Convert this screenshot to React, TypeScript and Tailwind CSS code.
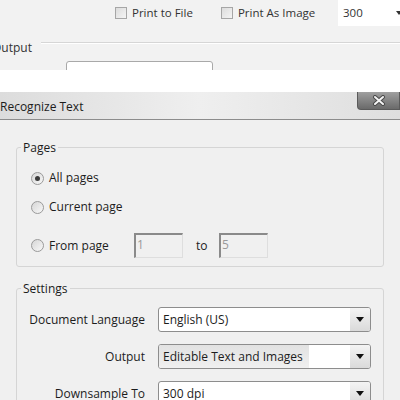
import React from 'react'

const font = "font-['Segoe_UI','Open_Sans',sans-serif]"

function Checkbox() {
  return <span className="inline-block w-[12px] h-[12px] border border-[#a6a6a6] bg-gradient-to-br from-[#dcdcdc] to-[#f4f4f4]" />
}

function Radio({ checked }: { checked?: boolean }) {
  return (
    <span className="flex items-center justify-center w-[13px] h-[13px] rounded-full border border-[#9a9a9a] bg-gradient-to-br from-[#d6d6d6] to-[#f8f8f8]">
      {checked && <span className="w-[5px] h-[5px] rounded-full bg-[#3a3a3a]" />}
    </span>
  )
}

function SunkenInput({ value }: { value: string }) {
  return (
    <div className="w-[49px] h-[25px] border border-[#dedede] border-t-[#8a8a8a] border-l-[#8a8a8a] border-t-2 border-l-2 bg-[#f0f0f0] text-[#9a9a9a] text-[12px] leading-[19px] pl-[1px]">
      {value}
    </div>
  )
}

function Select({ value, highlight }: { value: string; highlight?: boolean }) {
  return (
    <div className="flex w-[213px] h-[25px] rounded-[3px] border border-[#8d8d8d] bg-white overflow-hidden">
      <div className="flex-1 flex items-center">
        <span
          className={
            highlight
              ? 'flex items-center h-full w-[150px] pl-[4px] whitespace-nowrap bg-gradient-to-b from-[#e2e2e2] to-[#f0f0f0]'
              : 'pl-[4px] whitespace-nowrap'
          }
        >
          {value}
        </span>
      </div>
      <div className="w-[20px] flex items-center justify-center bg-gradient-to-b from-[#f4f4f4] to-[#dadada]">
        <svg width="8" height="5" viewBox="0 0 8 5">
          <path d="M0 0h8L4 5z" fill="#111" />
        </svg>
      </div>
    </div>
  )
}

export default function App() {
  return (
    <div className={`w-[400px] h-[400px] overflow-hidden bg-white text-[#1c1c1c] ${font}`}>
      {/* print dialog behind */}
      <div className="h-[70px] bg-[#f2f2f2] overflow-hidden text-[11.5px] text-[#333]">
        <div className="flex items-center h-[26px] pl-[115px]">
          <Checkbox />
          <span className="ml-[5px]">Print to File</span>
          <span className="ml-[28px] flex items-center">
            <Checkbox />
            <span className="ml-[5px]">Print As Image</span>
          </span>
          <div className="ml-auto w-[62px] h-[26px] bg-white flex items-center justify-between pl-[5px]">
            <span>300</span>
            <svg width="6" height="4" viewBox="0 0 6 4" className="mr-[-2px]">
              <path d="M0 0h6L3 4z" fill="#333" />
            </svg>
          </div>
        </div>
        <div className="flex items-start mt-[16px]">
          <span className="ml-[-8px] leading-[16px] mt-[-2px] text-[12px]">Output</span>
          <div className="flex-1 ml-[9px] h-[2px] border-t border-[#d6d6d6] border-b-white border-b" />
        </div>
        <div className="ml-[66px] mt-[5px] w-[147px] h-[20px] rounded-[3px] border border-[#a9a9a9] bg-white" />
      </div>
      <div className="h-[22px] bg-white" />

      {/* Recognize Text dialog */}
      <div className="h-[308px] bg-[#f0f0f0] text-[12px]">
        <div className="flex items-start justify-between h-[28px] bg-gradient-to-r from-[#dcdcdc] via-[#efefef] to-[#dedede] border-b border-[#8c8c8c]">
          <span className="text-[12px] leading-[16px] pt-[7px]">Recognize Text</span>
          <div className="w-[43px] h-[18px] rounded-bl-[4px] border border-[#5a5a5a] border-t-0 bg-gradient-to-b from-[#a0a0a0] to-[#6a6a6a] flex items-center justify-center">
            <svg width="14" height="11" viewBox="0 0 14 11">
              <path d="M3 2l8 7M11 2l-8 7" stroke="#4a4a4a" strokeWidth="4" strokeLinecap="round" />
              <path d="M3 2l8 7M11 2l-8 7" stroke="#f4f4f4" strokeWidth="2" strokeLinecap="round" />
            </svg>
          </div>
        </div>

        <div className="pt-[19px] px-[16px]">
          <fieldset className="border border-[#d5d5d5] rounded-[3px] pt-[12px] pb-[8px]">
            <legend className="ml-[4px] px-[2px] leading-[17px]">Pages</legend>
            <div className="pl-[14px]">
              <div className="flex items-center h-[20px] gap-[5px]">
                <Radio checked />
                <span>All pages</span>
              </div>
              <div className="flex items-center h-[20px] gap-[5px] mt-[9px]">
                <Radio />
                <span>Current page</span>
              </div>
              <div className="flex items-center h-[25px] mt-[16px]">
                <Radio />
                <span className="ml-[5px] w-[85px]">From page</span>
                <SunkenInput value="1" />
                <span className="ml-[13px] w-[23px]">to</span>
                <SunkenInput value="5" />
              </div>
            </div>
          </fieldset>

          <fieldset className="mt-[13px] border border-[#d5d5d5] rounded-[3px] pt-[10px] pb-[10px]">
            <legend className="ml-[4px] px-[2px] leading-[17px]">Settings</legend>
            <div className="grid grid-cols-[128px_213px] gap-x-[13px] gap-y-[12px] items-center">
              <span className="text-right">Document Language</span>
              <Select value="English (US)" />
              <span className="text-right">Output</span>
              <Select value="Editable Text and Images" highlight />
              <span className="text-right">Downsample To</span>
              <Select value="300 dpi" />
            </div>
          </fieldset>
        </div>
      </div>
    </div>
  )
}
